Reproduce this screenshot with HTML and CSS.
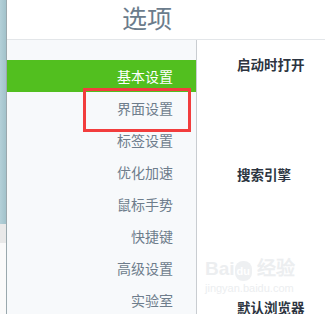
FILE: index.html
```html
<!DOCTYPE html>
<html lang="zh-CN">
<head>
    <meta charset="UTF-8">
    <title>选项</title>
    <link rel="stylesheet" href="styles.css">
</head>
<body>
    <div class="frame">
        <!-- strip of the window behind -->
        <div class="edge">
            <div class="edge-top"></div>
            <div class="edge-mid"></div>
            <div class="edge-low"></div>
        </div>

        <div class="window">
            <div class="header">选项</div>
            <div class="body">
                <ul class="menu">
                    <li class="active">基本设置</li>
                    <li>界面设置</li>
                    <li>标签设置</li>
                    <li>优化加速</li>
                    <li>鼠标手势</li>
                    <li>快捷键</li>
                    <li>高级设置</li>
                    <li>实验室</li>
                </ul>
                <div class="content">
                    <div class="section first">启动时打开</div>
                    <div class="section second">搜索引擎</div>
                    <div class="watermark">
                        <div class="wm-logo">Bai<span class="wm-du">du</span> 经验</div>
                        <div class="wm-url">jingyan.baidu.com</div>
                    </div>
                    <div class="section third">默认浏览器</div>
                </div>
            </div>
        </div>

        <!-- highlight drawn over the screenshot -->
        <div class="mark"></div>
    </div>
</body>
</html>
```

FILE: styles.css
```css
body {
    margin: 0;
    font-family: "Noto Sans CJK SC", "Noto Sans", sans-serif;
    background: #fff;
}

.frame {
    position: relative;
    display: flex;
    width: 325px;
    height: 314px;
    overflow: hidden;
}

.edge {
    width: 6px;
    flex-shrink: 0;
    display: flex;
    flex-direction: column;
    border-right: 1px solid #9aa8ad;
}

.edge-top {
    height: 224px;
    background: linear-gradient(to right, #b3d0d8, #a2c2cb);
}

.edge-mid {
    height: 19px;
    background: #e9e9e9;
}

.edge-low {
    flex: 1;
    background: #fafafa;
}

.window {
    flex: 1;
    display: flex;
    flex-direction: column;
}

.header {
    flex-shrink: 0;
    height: 39px;
    border-bottom: 1px solid #e3e6e9;
    padding-left: 115px;
    font-size: 25px;
    line-height: 34px;
    color: #6b7c8c;
}

.body {
    flex: 1;
    min-height: 0;
    display: flex;
}

.menu {
    list-style: none;
    margin: 0;
    padding: 20px 0 0;
    width: 189px;
    flex-shrink: 0;
    background: #f7f9fb;
    border-right: 1px solid #c9cdd1;
}

.menu li {
    height: 32px;
    line-height: 32px;
    padding-right: 23px;
    text-align: right;
    font-size: 14px;
    color: #6e7d8c;
}

.menu li.active {
    background: #52bf1f;
    color: #fff;
}

.content {
    flex: 1;
    padding-left: 40px;
}

.section {
    font-size: 13.5px;
    font-weight: bold;
    color: #2c3440;
    line-height: 20px;
}

.first {
    margin-top: 14px;
}

.second {
    margin-top: 90px;
}

.watermark {
    height: 111px;
    display: flex;
    flex-direction: column;
    justify-content: flex-end;
    margin-left: -32px;
    padding-bottom: 2px;
    color: #eceef0;
    font-family: "Liberation Sans", sans-serif;
}

.wm-logo {
    font-size: 19px;
    font-weight: bold;
    line-height: 20px;
}

.wm-du {
    display: inline-block;
    border-radius: 8px;
    background: #eef0f2;
    color: #fff;
    font-size: 11px;
    padding: 0 2px;
}

.wm-url {
    font-size: 11px;
    line-height: 14px;
}

.mark {
    position: absolute;
    left: 83px;
    top: 88px;
    width: 102px;
    height: 38px;
    border: 3px solid #f23d3d;
}
```
